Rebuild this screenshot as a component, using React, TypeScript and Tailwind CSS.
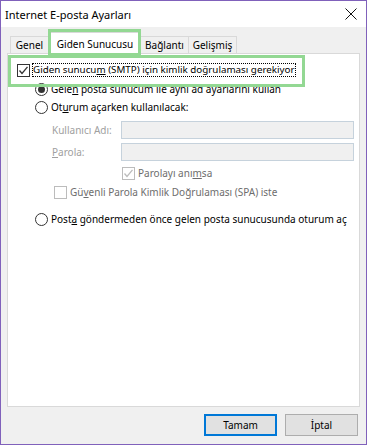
import React from "react";

const font = { fontFamily: '"Noto Sans", "Open Sans", sans-serif' };

function Check({ checked, disabled }: { checked?: boolean; disabled?: boolean }) {
  const c = disabled ? "#bcbcbc" : "#333333";
  return (
    <div
      className={`w-[13px] h-[13px] border flex items-center justify-center shrink-0 ${disabled ? "border-[#bcbcbc] bg-white" : "border-[#333333] bg-white"}`}
    >
      {checked && (
        <svg width="11" height="11" viewBox="0 0 11 11">
          <path d="M1.5 5.5 L4 8.5 L9.5 1.8" fill="none" stroke={c} strokeWidth="1.3" />
        </svg>
      )}
    </div>
  );
}

function Radio({ checked }: { checked?: boolean }) {
  return (
    <div className="w-[13px] h-[13px] rounded-full border border-[#333333] bg-white flex items-center justify-center shrink-0">
      {checked && <div className="w-[7px] h-[7px] rounded-full bg-[#333333]" />}
    </div>
  );
}

export default function App() {
  return (
    <div
      className="w-[367px] h-[445px] border border-[#8061bb] bg-[#f0f0f0] flex flex-col relative text-[10px] text-black overflow-hidden whitespace-nowrap"
      style={font}
    >
      {/* title bar */}
      <div className="h-[26px] bg-white flex items-center justify-between pl-[4px] pr-[8px] shrink-0">
        <span className="text-[11px] leading-none">Internet E-posta Ayarları</span>
        <svg width="12" height="12" viewBox="0 0 12 12" className="mr-[1px]">
          <path d="M0.5 0.5 L11.5 11.5 M11.5 0.5 L0.5 11.5" stroke="#111" strokeWidth="1" />
        </svg>
      </div>

      {/* tabs */}
      <div className="flex items-end pl-[9px] h-[26px] shrink-0 relative z-10">
        <div className="h-[17px] w-[39px] border border-b-0 border-[#d9d9d9] flex items-center justify-center leading-none">Genel</div>
        <div className="h-[22px] mb-[-1px] bg-white border border-b-0 border-[#d9d9d9] flex items-center leading-none w-[92px] justify-center">
          Giden Sunucusu
        </div>
        <div className="h-[17px] w-[48px] border border-b-0 border-l-0 border-[#d9d9d9] flex items-center justify-center leading-none">Bağlantı</div>
        <div className="h-[17px] w-[48px] border border-b-0 border-l-0 border-[#d9d9d9] flex items-center justify-center leading-none">Gelişmiş</div>
      </div>

      {/* panel */}
      <div className="mx-[6px] h-[354px] bg-white border border-[#d9d9d9] flex flex-col shrink-0">
        <div className="mt-[9px] h-[14px] flex items-center pl-[9px] gap-[2px]">
          <Check checked />
          <span className="leading-none border border-dotted border-black px-0 py-[1px] text-[9.8px]">
            Giden sunucu<span className="underline">m</span> (SMTP) için kimlik doğrulaması gerekiyor
          </span>
        </div>
        <div className="mt-[5px] h-[14px] flex items-center pl-[27px] gap-[3px]">
          <Radio checked />
          <span className="leading-none">
            Gele<span className="underline">n</span> posta sunucum ile aynı ad ayarlarını kullan
          </span>
        </div>
        <div className="mt-[4px] h-[14px] flex items-center pl-[27px] gap-[3px]">
          <Radio />
          <span className="leading-none">
            Ot<span className="underline">u</span>rum açarken kullanılacak:
          </span>
        </div>
        <div className="mt-[7px] h-[18px] flex items-center pl-[44px] text-[#a0a0a0]">
          <span className="w-[69px] leading-none">Kullanıcı Adı:</span>
          <div className="w-[233px] h-[18px] border border-[#c6d2dc] bg-[#f0f0f0]" />
        </div>
        <div className="mt-[4px] h-[18px] flex items-center pl-[44px] text-[#a0a0a0]">
          <span className="w-[69px] leading-none">
            <span className="underline">P</span>arola:
          </span>
          <div className="w-[233px] h-[18px] border border-[#c6d2dc] bg-[#f0f0f0]" />
        </div>
        <div className="mt-[5px] h-[14px] flex items-center pl-[114px] gap-[3px]">
          <Check checked disabled />
          <span className="leading-none text-[#6d6d6d]">
            Parolayı anı<span className="underline">m</span>sa
          </span>
        </div>
        <div className="mt-[5px] h-[14px] flex items-center pl-[46px] gap-[3px]">
          <Check disabled />
          <span className="leading-none text-[#6d6d6d]">
            Gü<span className="underline">v</span>enli Parola Kimlik Doğrulaması (SPA) iste
          </span>
        </div>
        <div className="mt-[13px] h-[14px] flex items-center pl-[27px] gap-[3px]">
          <Radio />
          <span className="leading-none">
            Post<span className="underline">a</span> göndermeden önce gelen posta sunucusunda oturum aç
          </span>
        </div>
      </div>

      {/* buttons */}
      <div className="flex justify-end gap-[8px] pr-[8px] mt-[7px]">
        <button className="w-[73px] h-[22px] border-2 border-[#0078d7] bg-[#e1e1e1] leading-none">Tamam</button>
        <button className="w-[73px] h-[22px] border border-[#adadad] bg-[#e1e1e1] leading-none">
          İptal
        </button>
      </div>

      {/* green highlight overlays */}
      <div className="absolute left-[47px] top-[28px] w-[93px] h-[27px] border-[3px] border-[#93d893] pointer-events-none z-20" />
      <div className="absolute left-[7px] top-[54px] w-[297px] h-[32px] border-[3px] border-[#93d893] pointer-events-none z-20" />
    </div>
  );
}
